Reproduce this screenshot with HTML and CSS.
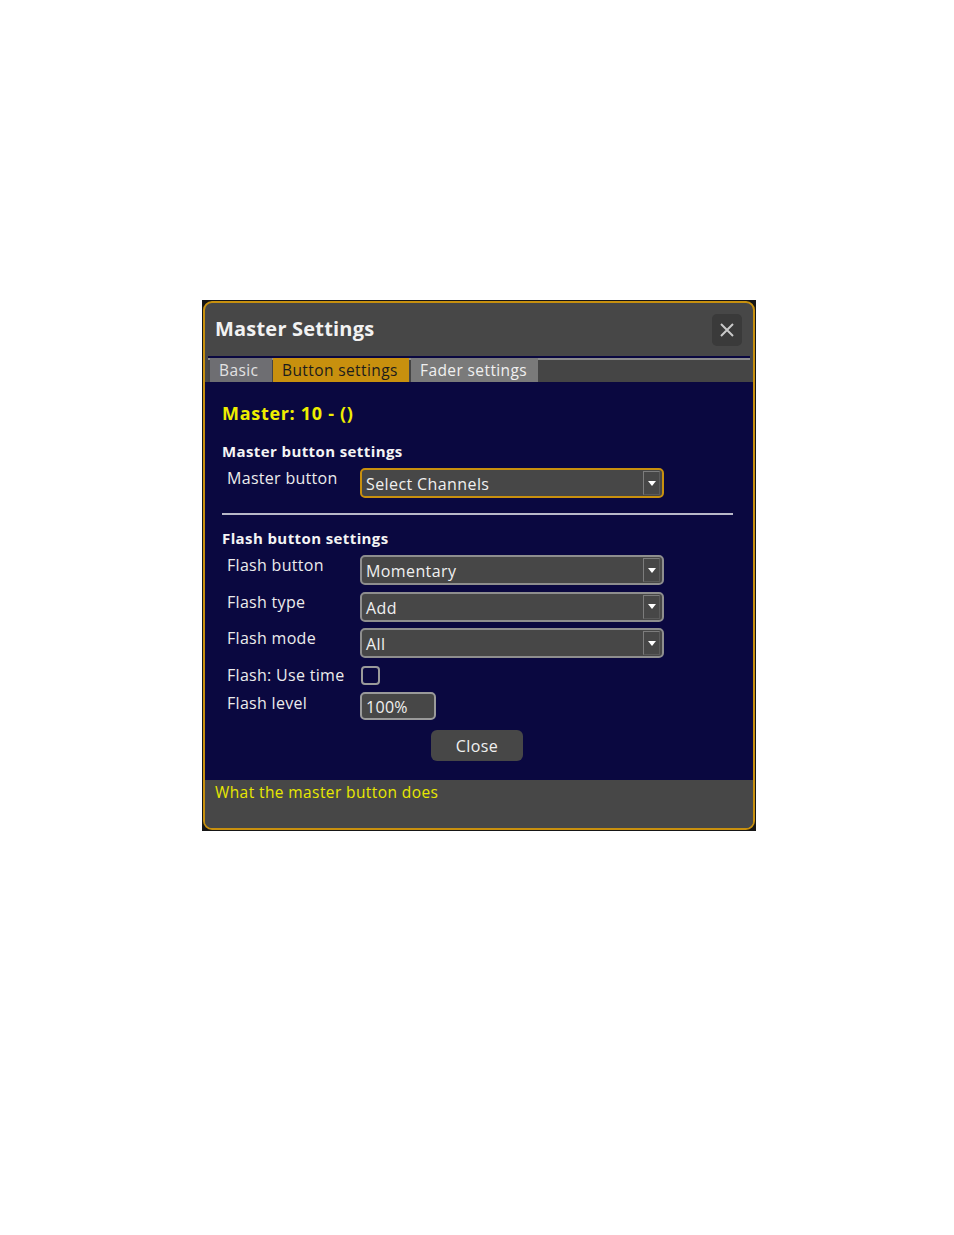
FILE: index.html
```html
<!DOCTYPE html>
<html>
<head>
<meta charset="utf-8">
<link rel="stylesheet" href="styles.css">
</head>
<body>
<div class="frame">
  <div class="dialog">
    <div class="titlebar">
      <div class="title">Master Settings</div>
      <div class="close-x">
        <svg width="16" height="16" viewBox="0 0 16 16"><path d="M2 2L14 14M14 2L2 14" stroke="#c9c9c9" stroke-width="2" fill="none"/></svg>
      </div>
    </div>
    <div class="tabs">
      <div class="tab tab-basic">Basic</div>
      <div class="tab tab-active">Button settings</div>
      <div class="tab tab-fader">Fader settings</div>
    </div>
    <div class="content">
      <div class="master-title">Master: 10 - ()</div>
      <div class="section">Master button settings</div>
      <div class="row first">
        <div class="label">Master button</div>
        <div class="select focused"><span class="sel-text">Select Channels</span><span class="drop"><span class="tri"></span></span></div>
      </div>
      <div class="sep"></div>
      <div class="section sec2">Flash button settings</div>
      <div class="rows">
        <div class="row">
          <div class="label">Flash button</div>
          <div class="select"><span class="sel-text">Momentary</span><span class="drop"><span class="tri"></span></span></div>
        </div>
        <div class="row">
          <div class="label">Flash type</div>
          <div class="select"><span class="sel-text">Add</span><span class="drop"><span class="tri"></span></span></div>
        </div>
        <div class="row">
          <div class="label">Flash mode</div>
          <div class="select"><span class="sel-text">All</span><span class="drop"><span class="tri"></span></span></div>
        </div>
      </div>
      <div class="row check-row">
        <div class="label">Flash: Use time</div>
        <div class="checkbox"></div>
      </div>
      <div class="row level-row">
        <div class="label">Flash level</div>
        <div class="input">100%</div>
      </div>
      <div class="btn-wrap"><div class="btn">Close</div></div>
    </div>
    <div class="footer">What the master button does</div>
  </div>
</div>
</body>
</html>
```
FILE: styles.css
```css
html, body {
  margin: 0;
  padding: 0;
  background: #ffffff;
}
body {
  font-family: "Open Sans", "Noto Sans", sans-serif;
  color: #ececec;
}
.frame {
  margin: 300px 0 0 202px;
  width: 554px;
  height: 531px;
  box-sizing: border-box;
  padding: 1px;
  background: #161616;
}
.dialog {
  height: 100%;
  box-sizing: border-box;
  border: 2px solid #c8900e;
  border-radius: 9px;
  background: #474747;
  display: flex;
  flex-direction: column;
  overflow: hidden;
}
.titlebar {
  height: 53px;
  flex: none;
  display: flex;
  align-items: center;
  justify-content: space-between;
  padding: 0 11px 0 10px;
}
.title {
  font-size: 20px;
  font-weight: 700;
  color: #f2f2f2;
  letter-spacing: 0.2px;
  margin-top: -2px;
}
.close-x {
  width: 30px;
  height: 32px;
  border-radius: 5px;
  background: #3a3a3a;
  display: flex;
  align-items: center;
  justify-content: center;
}
.tabs {
  height: 24px;
  flex: none;
  margin: 0 3px;
  border-top: 2px solid #0a0840;
  background: linear-gradient(#8c8c8c 0 2px, #454545 2px);
  display: flex;
  padding-left: 2px;
}
.tab {
  height: 24px;
  line-height: 24px;
  font-size: 15.5px;
  font-weight: 500;
  letter-spacing: 0.4px;
  padding: 0 9px;
  margin-right: 1px;
  box-sizing: border-box;
}
.tab-basic {
  background: #6e6e72;
  color: #e2e2e2;
  width: 62px;
}
.tab-active {
  background: #c8900e;
  color: #1c1c1c;
  width: 136px;
  margin-right: 2px;
}
.tab-fader {
  background: #7a7a7a;
  color: #f0f0f0;
  width: 127px;
}
.content {
  flex: 1;
  background: #0a0840;
  padding: 19px 0 0 17px;
}
.master-title {
  font-size: 18px;
  font-weight: 700;
  line-height: 24px;
  color: #eeee00;
  letter-spacing: 0.7px;
}
.section {
  margin-top: 16px;
  font-size: 15px;
  font-weight: 700;
  line-height: 20px;
  color: #f4f4f4;
  letter-spacing: 0.4px;
}
.sec2 {
  margin-top: 13px;
}
.row {
  display: flex;
  align-items: flex-start;
}
.row.first {
  margin-top: 7px;
}
.label {
  width: 133px;
  margin-left: 5px;
  font-size: 16px;
  font-weight: 500;
  line-height: 20px;
  letter-spacing: 0.3px;
  color: #ececec;
  flex: none;
}
.select {
  width: 304px;
  height: 30px;
  box-sizing: border-box;
  border: 2px solid #8e8e8e;
  border-radius: 5px;
  background: #474747;
  display: flex;
  align-items: center;
  justify-content: space-between;
  padding: 0 2px 0 4px;
}
.select.focused {
  border-color: #c8900e;
}
.sel-text {
  font-size: 16px;
  font-weight: 500;
  letter-spacing: 0.4px;
  color: #f0f0f0;
  padding-top: 2px;
}
.drop {
  width: 17px;
  height: 24px;
  box-sizing: border-box;
  border: 1px solid #7c7c7c;
  border-right-color: #5a5a5a;
  border-bottom-color: #5a5a5a;
  display: flex;
  align-items: center;
  justify-content: center;
}
.tri {
  width: 0;
  height: 0;
  border-left: 4px solid transparent;
  border-right: 4px solid transparent;
  border-top: 5px solid #ffffff;
}
.rows {
  margin-top: 7px;
  display: flex;
  flex-direction: column;
  gap: 6.5px;
}
.sep {
  margin: 15px 20px 0 0;
  height: 2px;
  background: #b8b8c8;
}
.check-row {
  margin-top: 8px;
}
.check-row .label {
  margin-top: -1px;
}
.checkbox {
  width: 19px;
  height: 19px;
  box-sizing: border-box;
  border: 2px solid #9a9a9a;
  border-radius: 4px;
  margin-left: 1px;
}
.level-row {
  margin-top: 7px;
}
.level-row .label {
  padding-top: 1px;
}
.input {
  width: 76px;
  height: 28px;
  box-sizing: border-box;
  border: 2px solid #9a9a9a;
  border-radius: 5px;
  background: #474747;
  font-size: 16px;
  font-weight: 500;
  letter-spacing: 0.3px;
  line-height: 24px;
  padding: 1px 0 0 4px;
  color: #f0f0f0;
}
.btn-wrap {
  margin-top: 10px;
  display: flex;
  justify-content: center;
  padding-right: 21px;
}
.btn {
  width: 92px;
  height: 31px;
  border-radius: 6px;
  background: #474747;
  color: #f0f0f0;
  font-size: 16px;
  font-weight: 500;
  letter-spacing: 0.4px;
  display: flex;
  align-items: center;
  justify-content: center;
}
.footer {
  height: 48px;
  flex: none;
  background: #474747;
  color: #e8e800;
  font-size: 15.5px;
  font-weight: 500;
  letter-spacing: 0.4px;
  padding: 1px 0 0 10px;
  line-height: 22px;
  box-sizing: border-box;
}
```
